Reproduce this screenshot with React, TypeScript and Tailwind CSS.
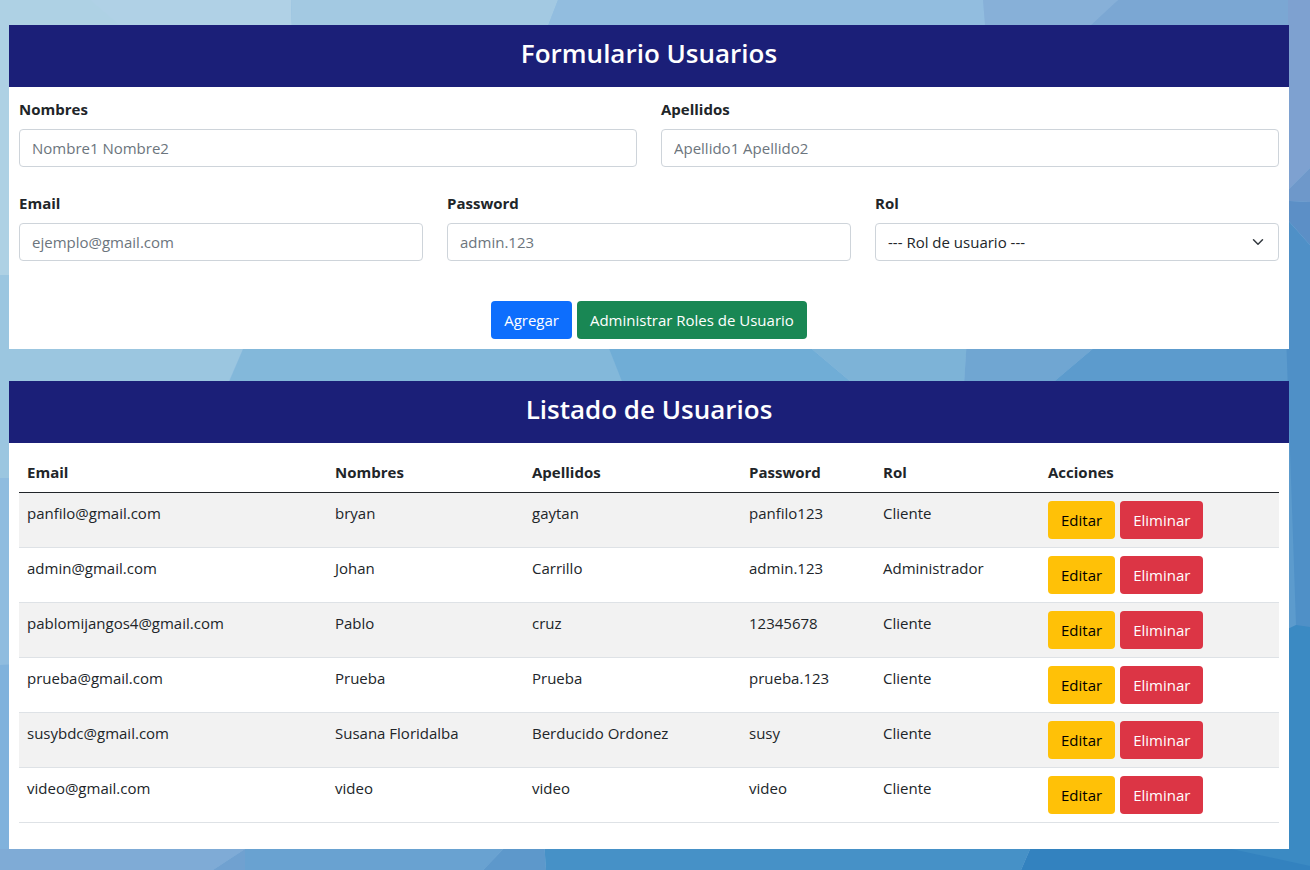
import { useId } from "react";
import type { ReactNode } from "react";

type User = {
  email: string;
  nombres: string;
  apellidos: string;
  password: string;
  rol: string;
};

const users: User[] = [
  { email: "panfilo@gmail.com", nombres: "bryan", apellidos: "gaytan", password: "panfilo123", rol: "Cliente" },
  { email: "admin@gmail.com", nombres: "Johan", apellidos: "Carrillo", password: "admin.123", rol: "Administrador" },
  { email: "pablomijangos4@gmail.com", nombres: "Pablo", apellidos: "cruz", password: "12345678", rol: "Cliente" },
  { email: "prueba@gmail.com", nombres: "Prueba", apellidos: "Prueba", password: "prueba.123", rol: "Cliente" },
  { email: "susybdc@gmail.com", nombres: "Susana Floridalba", apellidos: "Berducido Ordonez", password: "susy", rol: "Cliente" },
  { email: "video@gmail.com", nombres: "video", apellidos: "video", password: "video", rol: "Cliente" },
];

const columns = [
  { title: "Email", width: "w-[308px]" },
  { title: "Nombres", width: "w-[197px]" },
  { title: "Apellidos", width: "w-[217px]" },
  { title: "Password", width: "w-[134px]" },
  { title: "Rol", width: "w-[165px]" },
  { title: "Acciones", width: "w-[239px]" },
];

const facets = [
  { points: "0,0 291,0 300,280 0,275", fill: "#b0d1e6" },
  { points: "0,0 90,0 125,30 60,275 0,275", fill: "#aed1e4" },
  { points: "291,0 558,0 450,280 300,280", fill: "#a3c9e2" },
  { points: "558,0 983,0 1010,280 450,280", fill: "#92bddf" },
  { points: "983,0 1118,0 1000,130 1005,280", fill: "#87b0d8" },
  { points: "1118,0 1288,0 1288,280 1000,280 1000,110", fill: "#7ba7d3" },
  { points: "1288,0 1310,0 1310,168 1288,190", fill: "#7ea1d0" },
  { points: "1310,168 1310,202 1270,200 1288,190", fill: "#6e98ca" },
  { points: "1270,200 1310,202 1310,245", fill: "#5c8fc6" },
  { points: "1270,200 1310,245 1310,640 1275,640", fill: "#4f90c7" },
  { points: "0,275 275,275 229,381 190,478 0,478", fill: "#9bc6e0" },
  { points: "275,275 580,275 622,381 660,478 188,478", fill: "#83b8da" },
  { points: "580,275 724,275 965,478 660,478", fill: "#70add6" },
  { points: "724,275 971,275 958,478 965,478", fill: "#7db3d7" },
  { points: "971,275 1180,275 940,478 958,478", fill: "#70a6d2" },
  { points: "1180,275 1284,275 1296,625 1275,650 900,650 940,478", fill: "#5c9bcd" },
  { points: "0,478 940,478 940,665 0,665", fill: "#8fbcdf" },
  { points: "0,665 420,640 300,800 0,855", fill: "#80b2dc" },
  { points: "0,849 245,849 213,870 0,870", fill: "#7fabd6" },
  { points: "245,849 245,870 213,870", fill: "#70a1d0" },
  { points: "245,840 512,840 483,870 245,870", fill: "#69a2d1" },
  { points: "512,840 544,840 546,870 483,870", fill: "#5d98cb" },
  { points: "544,840 1034,840 1021,870 546,870", fill: "#4691c7" },
  { points: "1034,840 1310,840 1310,870 1021,870", fill: "#3382bf" },
  { points: "1275,635 1296,625 1310,627 1310,866 1190,840", fill: "#3b8ac3" },
];

function PolygonBackdrop() {
  return (
    <svg
      className="absolute inset-0 size-full"
      viewBox="0 0 1310 870"
      preserveAspectRatio="none"
      aria-hidden="true"
    >
      {facets.map((facet) => (
        <polygon key={facet.points} points={facet.points} fill={facet.fill} />
      ))}
    </svg>
  );
}

function PanelTitle({ children }: { children: ReactNode }) {
  return (
    <h2 className="bg-[#1b1f78] pt-[11px] pb-[17px] text-center text-[26px] leading-[34px] font-semibold text-white">
      {children}
    </h2>
  );
}

function TextField({ label, type, placeholder }: { label: string; type: string; placeholder: string }) {
  const id = useId();
  return (
    <div className="flex min-w-0 flex-col gap-2">
      <label htmlFor={id} className="font-bold">{label}</label>
      <input
        id={id}
        type={type}
        placeholder={placeholder}
        className="h-[38px] w-full rounded border border-[#ced4da] bg-white px-3 placeholder:text-[#6c757d]"
      />
    </div>
  );
}

function RoleField() {
  const id = useId();
  return (
    <div className="flex min-w-0 flex-col gap-2">
      <label htmlFor={id} className="font-bold">Rol</label>
      <div className="relative">
        <select
          id={id}
          className="h-[38px] w-full appearance-none rounded border border-[#ced4da] bg-white pr-9 pl-3"
        >
          <option>--- Rol de usuario ---</option>
          <option>Administrador</option>
          <option>Cliente</option>
        </select>
        <svg
          className="pointer-events-none absolute top-1/2 right-[13px] h-3 w-4 -translate-y-1/2"
          viewBox="0 0 16 16"
          fill="none"
          stroke="#343a40"
          strokeWidth="2"
          strokeLinecap="round"
          strokeLinejoin="round"
          aria-hidden="true"
        >
          <path d="M2 5l6 6 6-6" />
        </svg>
      </div>
    </div>
  );
}

function Button({ color, children }: { color: string; children: ReactNode }) {
  return (
    <button type="button" className={`h-[38px] cursor-pointer rounded px-[13px] ${color}`}>
      {children}
    </button>
  );
}

export default function App() {
  return (
    <div className="relative min-h-screen bg-[#8fbcdf] font-['Open_Sans','Noto_Sans',sans-serif] text-[15px] leading-6 text-[#212529]">
      <PolygonBackdrop />
      <main className="relative flex flex-col gap-8 pt-[25px] pr-[21px] pb-[21px] pl-[9px]">
        <section className="bg-white">
          <PanelTitle>Formulario Usuarios</PanelTitle>
          <form className="flex flex-col gap-6 p-[10px]">
            <div className="grid grid-cols-2 gap-6">
              <TextField label="Nombres" type="text" placeholder="Nombre1 Nombre2" />
              <TextField label="Apellidos" type="text" placeholder="Apellido1 Apellido2" />
            </div>
            <div className="grid grid-cols-3 gap-6">
              <TextField label="Email" type="email" placeholder="ejemplo@gmail.com" />
              <TextField label="Password" type="text" placeholder="admin.123" />
              <RoleField />
            </div>
            <div className="flex justify-center gap-[5px] pt-4">
              <Button color="bg-[#0d6efd] text-white">Agregar</Button>
              <Button color="bg-[#198754] text-white">Administrar Roles de Usuario</Button>
            </div>
          </form>
        </section>

        <section className="bg-white">
          <PanelTitle>Listado de Usuarios</PanelTitle>
          <div className="px-[10px] pt-[9px] pb-[26px]">
            <table className="w-full border-collapse text-left">
              <thead>
                <tr className="border-b border-[#212529]">
                  {columns.map((column) => (
                    <th key={column.title} scope="col" className={`p-2 font-bold ${column.width}`}>
                      {column.title}
                    </th>
                  ))}
                </tr>
              </thead>
              <tbody>
                {users.map((user) => (
                  <tr key={user.email} className="border-b border-[#dee2e6] align-top odd:bg-[#f2f2f2]">
                    <td className="p-2">{user.email}</td>
                    <td className="p-2">{user.nombres}</td>
                    <td className="p-2">{user.apellidos}</td>
                    <td className="p-2">{user.password}</td>
                    <td className="p-2">{user.rol}</td>
                    <td className="p-2">
                      <div className="flex gap-[5px]">
                        <Button color="bg-[#ffc107] text-black">Editar</Button>
                        <Button color="bg-[#dc3545] text-white">Eliminar</Button>
                      </div>
                    </td>
                  </tr>
                ))}
              </tbody>
            </table>
          </div>
        </section>
      </main>
    </div>
  );
}
